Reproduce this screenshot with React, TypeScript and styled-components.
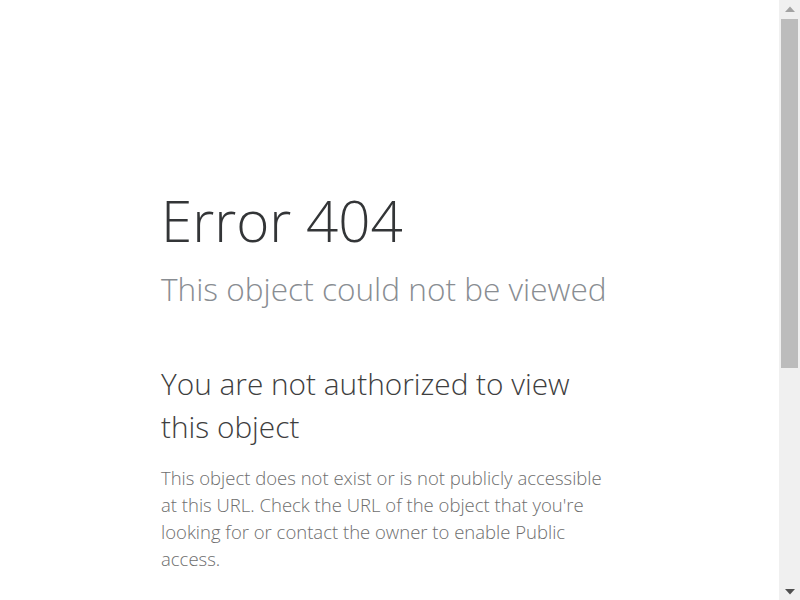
import React from "react";
import styled, { createGlobalStyle } from "styled-components";

const Global = createGlobalStyle`
  html, body { margin: 0; padding: 0; background: #ffffff; }
  body { font-family: "Open Sans", "Segoe UI", sans-serif; font-weight: 300; }
`;

const Page = styled.main`
  min-height: 976px;
  box-sizing: border-box;
  padding: 183px 21px 0 0;
  display: flex;
  justify-content: center;
`;

const Column = styled.section`
  width: 457px;
  display: flex;
  flex-direction: column;
`;

const Title = styled.h1`
  margin: 0;
  font-size: 56.5px;
  line-height: 76px;
  font-weight: 300;
  color: #333537;
`;

const Subtitle = styled.h2`
  margin: 8px 0 0;
  font-size: 31.6px;
  line-height: 44px;
  font-weight: 300;
  color: #898d92;
`;

const Heading = styled.h3`
  margin: 51px 0 0;
  font-size: 29.8px;
  line-height: 43px;
  font-weight: 300;
  color: #3e3e3e;
`;

const Body = styled.p`
  margin: 16px 0 0;
  font-size: 18.5px;
  line-height: 27px;
  font-weight: 300;
  color: #6e6e6e;
`;

const Scrollbar = styled.div`
  position: fixed;
  top: 0;
  right: 0;
  width: 21px;
  height: 100vh;
  background: #f0f0f0;
  display: flex;
  flex-direction: column;
  align-items: center;
`;

const ArrowBox = styled.div`
  height: 17px;
  width: 100%;
  display: flex;
  align-items: center;
  justify-content: center;
`;

const Track = styled.div`
  flex: 1;
  width: 17px;
  display: flex;
  flex-direction: column;
`;

const Thumb = styled.div`
  margin-top: 2px;
  height: 349px;
  background: #bcbcbc;
`;

function Arrow({ down, color }: { down?: boolean; color: string }) {
  return (
    <ArrowBox>
      <svg width="10" height="6" viewBox="0 0 10 6">
        <path d={down ? "M0 0 L10 0 L5 5.5 Z" : "M0 6 L10 6 L5 0.5 Z"} fill={color} />
      </svg>
    </ArrowBox>
  );
}

export default function App() {
  return (
    <>
      <Global />
      <Page>
        <Column>
          <Title>Error 404</Title>
          <Subtitle>This object could not be viewed</Subtitle>
          <Heading>You are not authorized to view this object</Heading>
          <Body>
            This object does not exist or is not publicly accessible at this
            URL. Check the URL of the object that you're looking for or contact
            the owner to enable Public access.
          </Body>
        </Column>
      </Page>
      <Scrollbar aria-hidden="true">
        <Arrow color="#a3a3a3" />
        <Track>
          <Thumb />
        </Track>
        <Arrow down color="#505050" />
      </Scrollbar>
    </>
  );
}
